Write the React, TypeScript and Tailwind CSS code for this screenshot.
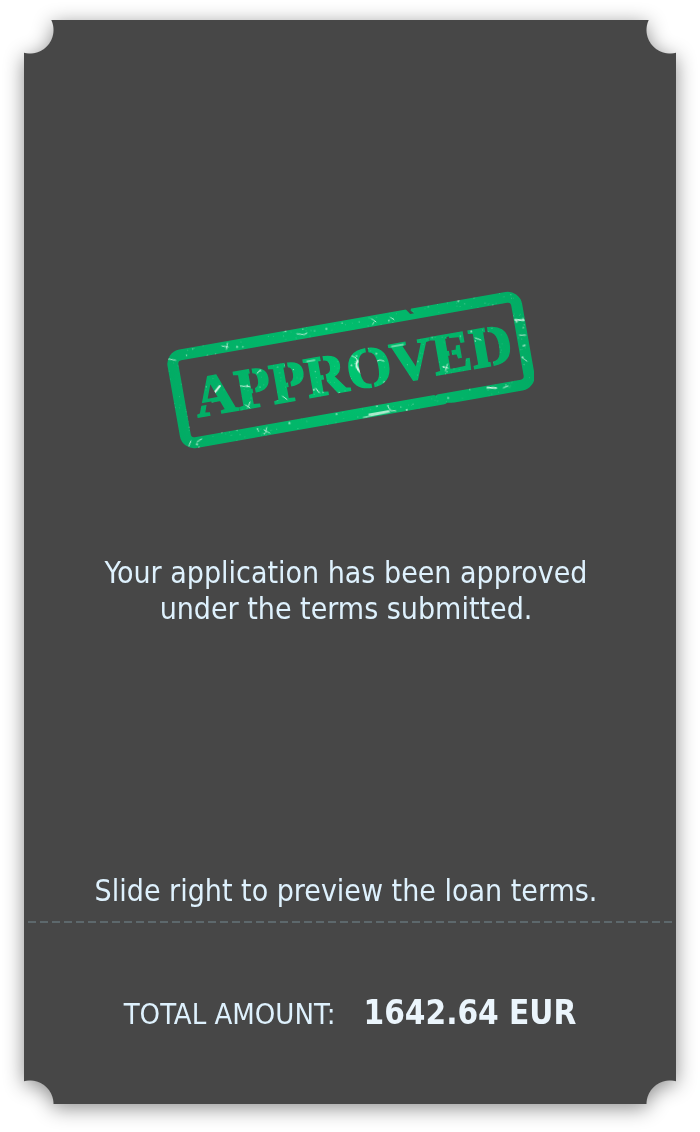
const NOTCHES =
  "[mask-image:radial-gradient(circle_at_6px_10px,transparent_23px,black_24px),radial-gradient(circle_at_calc(100%-6px)_10px,transparent_23px,black_24px),radial-gradient(circle_at_6px_100%,transparent_23px,black_24px),radial-gradient(circle_at_calc(100%-6px)_100%,transparent_23px,black_24px)] [mask-composite:intersect]";

// Deterministic pseudo-random numbers in 0..1.
function noise(n: number) {
  const v = Math.sin(n * 12.9898) * 43758.5453;
  return v - Math.floor(v);
}

// Grain of the worn ink, as [x, y, radius].
const specks = Array.from({ length: 620 }, (_, i) => [
  noise(i + 1) * 360,
  noise(i + 1001) * 100,
  0.25 + noise(i + 2001) ** 4 * 0.8,
]);

function ApprovedStamp() {
  return (
    <svg
      viewBox="0 0 368 158"
      className="w-[368px] max-w-full"
      role="img"
      aria-label="Approved"
    >
      <defs>
        <radialGradient id="ink" gradientUnits="userSpaceOnUse" cx="180" cy="50" r="190">
          <stop offset="0" stopColor="#00c571" />
          <stop offset="0.3" stopColor="#02b96b" />
          <stop offset="1" stopColor="#02ab64" />
        </radialGradient>
        <pattern id="worn-ink" patternUnits="userSpaceOnUse" x="-5" y="-5" width="370" height="110">
          <g transform="translate(5 5)">
            <rect x="-5" y="-5" width="370" height="110" fill="url(#ink)" />
            <g fill="#a5e8c8">
              {specks.map(([x, y, r], i) => (
                <circle key={i} cx={x} cy={y} r={r} />
              ))}
            </g>
            <g fill="none" stroke="#dff8ea" strokeLinecap="round">
              <path
                d="M1 7l8 3M57 4l6 2M63 2l-2 6M133 5l7 2 3-1M209 3l4 4M211 7l-2 2M228 5l3 3M352 45l6 1M351 68l4 4M10 92l-3 5M16 94l5-2M84 94l5 4M87 92l-2 5M184 99l27-1M210 92l2 5 5 1M327 94l5-1"
                strokeWidth="0.8"
              />
              <path d="M190 97l20 0M311 91l9 2M350 29l9 2" strokeWidth="1.3" />
              <path d="M40 50l8-7M188 42q-4 5 1 12q3 3 4 1" strokeWidth="2" />
              <path
                d="M66 46l12 3M87 37l4-3M70 66l4 4M75 64l-3 5M183 36l4 3 2 5M204 47l6-2 4 2M224 34l12 0M271 63l5 2M276 61l-3 6M138 34l8 0M142 62l3 5M108 64l4 4M308 40l5 3"
                strokeWidth="0.9"
              />
            </g>
          </g>
        </pattern>
        <mask id="stencil" maskUnits="userSpaceOnUse" x="0" y="0" width="360" height="100">
          <rect width="360" height="100" fill="white" />
          <path
            d="M24 58h13M81 26v39M117 26v39M153 26v39M199 26v48M281 34v31M320 26v48"
            stroke="black"
            strokeWidth="2.5"
          />
        </mask>
        <mask id="wear" maskUnits="userSpaceOnUse" x="-5" y="-5" width="370" height="110">
          <rect x="-5" y="-5" width="370" height="110" fill="white" />
          <path d="M244-1l4 6 4 0-3-3 1-3zM262 102l7-3 6 1 4 3zM256 88l3 2 3-2z" fill="black" />
        </mask>
      </defs>
      <g transform="translate(185 79) rotate(-10) translate(-180 -50)">
        <rect
          x="5.5"
          y="5.5"
          width="349"
          height="89"
          rx="9"
          fill="none"
          stroke="url(#worn-ink)"
          strokeWidth="11"
          mask="url(#wear)"
        />
        <text
          x="182"
          y="70"
          textAnchor="middle"
          fill="url(#worn-ink)"
          stroke="url(#worn-ink)"
          strokeWidth="1.5"
          mask="url(#stencil)"
          className="font-['Liberation_Serif',serif] text-[58px] font-bold"
        >
          APPROVED
        </text>
      </g>
    </svg>
  );
}

export default function App() {
  return (
    <div className="flex min-h-screen flex-col bg-white px-6 pt-5 pb-7 font-['DejaVu_Sans_Condensed','DejaVu_Sans',sans-serif] text-[#def1fd]">
      <div className="flex flex-1 flex-col drop-shadow-[0_4px_10px_rgba(0,0,0,0.45)]">
        <main className={`flex flex-1 flex-col bg-[#474747] ${NOTCHES}`}>
          <section className="flex flex-1 flex-col items-center px-4 pt-[271px] pb-3 text-center text-[30px] leading-[36px]">
            <ApprovedStamp />
            <p className="mt-[106px] pr-2">
              Your application has been approved
              <br />
              under the terms submitted.
            </p>
            <p className="mt-auto pr-2 pt-8">Slide right to preview the loan terms.</p>
          </section>
          <div className="mx-1 h-0.5 bg-[repeating-linear-gradient(90deg,#5d686c_0_8px,transparent_8px_12px)]" />
          <dl className="flex flex-wrap items-baseline justify-center gap-x-7 px-4 py-[70px]">
            <dt className="text-[29px] leading-10">TOTAL AMOUNT:</dt>
            <dd className="text-[33px] leading-10 font-bold text-[#ebf5fc]">1642.64 EUR</dd>
          </dl>
        </main>
      </div>
    </div>
  );
}
